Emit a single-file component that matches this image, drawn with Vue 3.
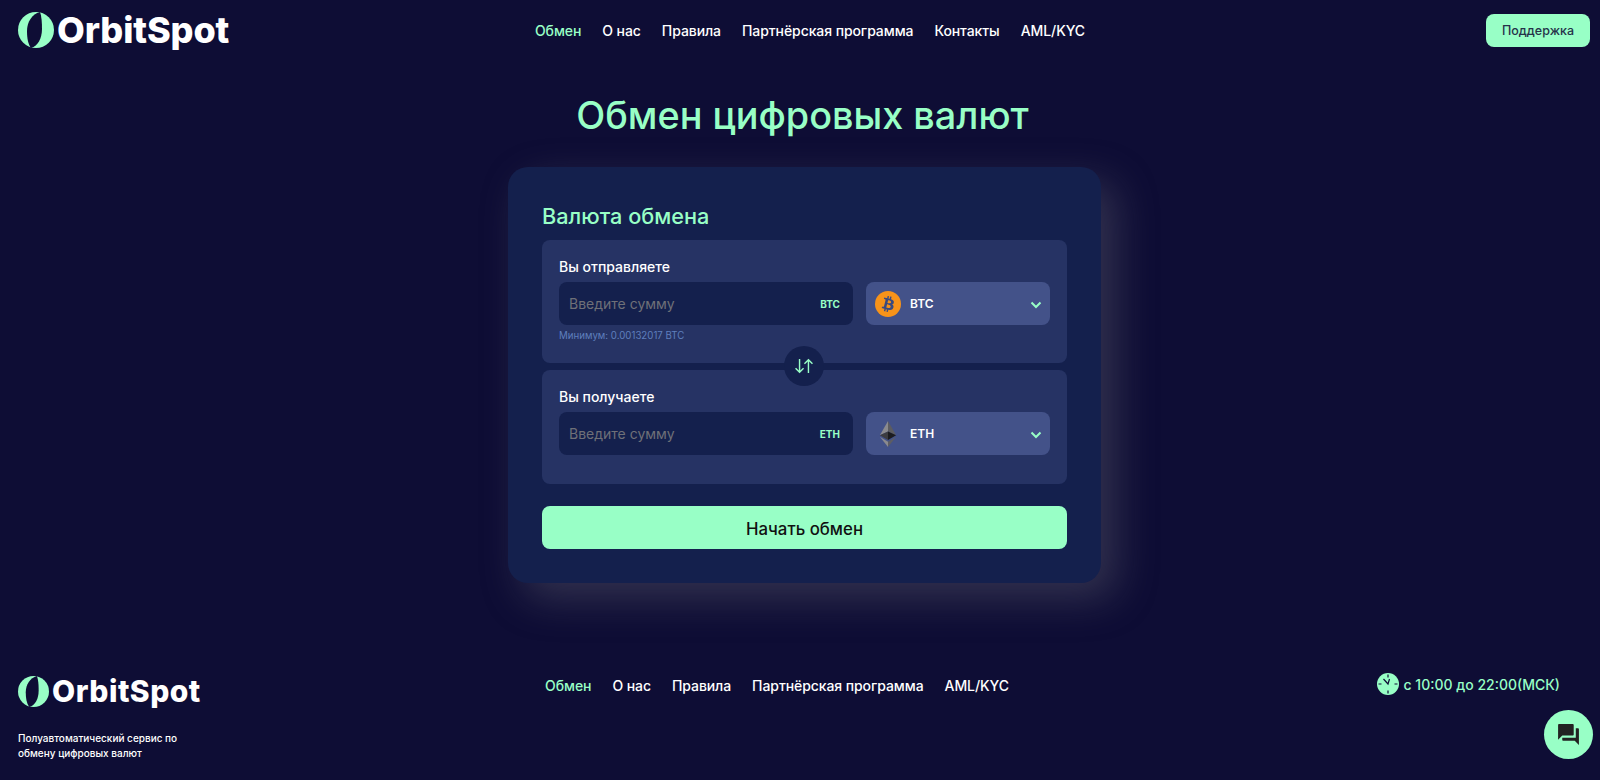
<template>
  <div class="page">
    <header class="top">
      <a class="logo">
        <svg class="logo-mark" viewBox="0 0 36 36">
          <circle cx="18" cy="18" r="18" fill="#98ffc6" />
          <path d="M22 0C14 2 9 10 9 19c0 7 1 13 4 17 7-2 11-10 11-19 0-7-.5-13-2-17z" fill="#0e0d35" />
        </svg>
        <span>OrbitSpot</span>
      </a>
      <nav class="menu">
        <a v-for="(item, i) in topLinks" :key="item" :class="{ active: i === 0 }">{{ item }}</a>
      </nav>
      <button class="support">Поддержка</button>
    </header>

    <main class="content">
      <h1>Обмен цифровых валют</h1>
      <section class="card">
        <h2>Валюта обмена</h2>
        <div class="panels">
          <div class="panel first">
            <label>Вы отправляете</label>
            <div class="row">
              <div class="amount">
                <input placeholder="Введите сумму" />
                <span>BTC</span>
              </div>
              <div class="select">
                <svg class="coin" viewBox="0 0 32 32">
                  <circle cx="16" cy="16" r="16" fill="#f7931a" />
                  <path fill="#3a4a80" d="M23.189 14.02c.314-2.096-1.283-3.223-3.465-3.975l.708-2.84-1.728-.43-.69 2.765c-.454-.114-.92-.22-1.385-.326l.695-2.783L15.596 6l-.708 2.839c-.376-.086-.746-.17-1.104-.26l.002-.009-2.384-.595-.46 1.846s1.283.294 1.256.312c.7.175.826.638.805 1.006l-.806 3.235c.048.012.11.03.18.057l-.183-.045-1.13 4.532c-.086.212-.303.531-.793.41.018.025-1.256-.313-1.256-.313l-.858 1.978 2.25.561c.418.105.828.215 1.231.318l-.715 2.872 1.727.43.708-2.84c.472.127.93.245 1.378.357l-.706 2.828 1.728.43.715-2.866c2.948.558 5.164.333 6.097-2.333.752-2.146-.037-3.385-1.588-4.192 1.13-.26 1.98-1.003 2.207-2.538zm-3.95 5.538c-.533 2.147-4.148.986-5.32.695l.95-3.805c1.172.293 4.929.872 4.37 3.11zm.535-5.569c-.487 1.953-3.495.96-4.47.717l.86-3.45c.975.243 4.118.696 3.61 2.733z" />
                </svg>
                <b>BTC</b>
                <svg class="chev" viewBox="0 0 12 8"><path d="M1.5 1.5 6 6l4.500-4.500" /></svg>
              </div>
            </div>
            <p class="min">Минимум: 0.00132017 BTC</p>
          </div>

          <div class="swap">
            <svg viewBox="0 0 22 18">
              <path d="M6 1v15M1.500 11.500 6 16l4.500-4.500M16 17V2M11.500 6.500 16 2l4.500 4.500" />
            </svg>
          </div>

          <div class="panel second">
            <label>Вы получаете</label>
            <div class="row">
              <div class="amount">
                <input placeholder="Введите сумму" />
                <span>ETH</span>
              </div>
              <div class="select">
                <svg class="coin" viewBox="0 0 32 32">
                  <polygon points="16,0 6,17.500 16,13" fill="#8a8a8e" />
                  <polygon points="16,0 26,17.500 16,13" fill="#5c5c60" />
                  <polygon points="16,13 6,17.500 16,23.500" fill="#3c3c40" />
                  <polygon points="16,13 26,17.500 16,23.500" fill="#1c1c1f" />
                  <polygon points="6,19.500 16,32 16,25.500" fill="#8a8a8e" />
                  <polygon points="26,19.500 16,32 16,25.500" fill="#5d5d62" />
                </svg>
                <b>ETH</b>
                <svg class="chev" viewBox="0 0 12 8"><path d="M1.5 1.5 6 6l4.500-4.500" /></svg>
              </div>
            </div>
          </div>
        </div>
        <button class="start">Начать обмен</button>
      </section>
    </main>

    <footer class="bottom">
      <div class="about">
        <a class="logo small">
          <svg class="logo-mark" viewBox="0 0 36 36">
            <circle cx="18" cy="18" r="18" fill="#98ffc6" />
            <path d="M22 0C14 2 9 10 9 19c0 7 1 13 4 17 7-2 11-10 11-19 0-7-.5-13-2-17z" fill="#0e0d35" />
          </svg>
          <span>OrbitSpot</span>
        </a>
        <p>Полуавтоматический сервис по обмену цифровых валют</p>
      </div>
      <nav class="menu">
        <a v-for="(item, i) in bottomLinks" :key="item" :class="{ active: i === 0 }">{{ item }}</a>
      </nav>
      <div class="hours">
        <svg viewBox="0 0 22 22">
          <circle cx="11" cy="11" r="11" fill="#98ffc6" />
          <path d="M11 1.500v3M11 17.500v3M1.500 11h3M17.500 11h3" stroke="#0e0d35" stroke-width="1.200" />
          <path d="M6.500 6 11 11l1.500-5" stroke="#0e0d35" stroke-width="1.200" fill="none" />
        </svg>
        <span>с 10:00 до 22:00(МСК)</span>
      </div>
    </footer>

    <button class="chat">
      <svg viewBox="0 0 24 24">
        <path d="M21 6h-2v9H6v2c0 .55.45 1 1 1h11l4 4V7c0-.55-.45-1-1-1zm-4 6V3c0-.55-.45-1-1-1H3c-.55 0-1 .45-1 1v14l4-4h10c.55 0 1-.45 1-1z" />
      </svg>
    </button>
  </div>
</template>

<script setup>
const topLinks = ['Обмен', 'О нас', 'Правила', 'Партнёрская программа', 'Контакты', 'AML/KYC']
const bottomLinks = ['Обмен', 'О нас', 'Правила', 'Партнёрская программа', 'AML/KYC']
</script>

<style>
html, body {
  margin: 0;
  background: #0e0d35;
}
</style>

<style scoped>
.page {
  position: relative;
  height: 780px;
  overflow: hidden;
  background: #0e0d35;
  color: #fff;
  font-family: Inter, "Noto Sans", sans-serif;
}

.top {
  display: grid;
  grid-template-columns: 1fr auto 1fr;
  align-items: center;
  height: 60px;
  padding: 0 10px 0 18px;
}

.top .menu {
  margin-left: 12px;
}

.logo {
  display: flex;
  align-items: center;
  gap: 3px;
  font-size: 36px;
  font-weight: 800;
  letter-spacing: -0.1px;
}

.logo-mark {
  width: 36px;
  height: 36px;
}

.logo.small {
  font-size: 30px;
  letter-spacing: 0.5px;
}

.logo.small .logo-mark {
  width: 31px;
  height: 31px;
}

.menu {
  display: flex;
  gap: 21px;
  font-size: 14px;
  font-weight: 500;
  letter-spacing: -0.08px;
}

.menu .active {
  color: #98ffc6;
}

.support {
  justify-self: end;
  width: 104px;
  height: 33px;
  border: none;
  border-radius: 8px;
  background: #98ffc6;
  color: #26324a;
  font: 500 12.5px Inter, sans-serif;
}

.content {
  display: flex;
  flex-direction: column;
  align-items: center;
  padding-left: 9px;
}

h1 {
  margin: 29px 4px 25px 0;
  color: #98ffc6;
  font-size: 37.8px;
  font-weight: 500;
  line-height: 53px;
}

.card {
  box-sizing: border-box;
  width: 593px;
  height: 416px;
  padding: 34px;
  border-radius: 20px;
  background: #14204d;
  box-shadow: 15px 15px 40px rgba(96, 96, 110, 0.45);
}

h2 {
  margin: 1px 0 9px;
  color: #98ffc6;
  font-size: 21.7px;
  font-weight: 500;
  line-height: 29px;
}

.panels {
  position: relative;
  display: flex;
  flex-direction: column;
  gap: 7px;
}

.panel {
  box-sizing: border-box;
  padding: 15px 17px 0;
  border-radius: 8px;
  background: #263364;
}

.panel.first {
  height: 123px;
}

.panel.second {
  height: 114px;
}

label {
  display: block;
  margin-bottom: 4px;
  font-size: 14px;
  font-weight: 500;
  line-height: 23px;
}

.row {
  display: flex;
  gap: 13px;
}

.amount {
  display: flex;
  align-items: center;
  box-sizing: border-box;
  width: 294px;
  height: 43px;
  padding: 0 13px 0 10px;
  border-radius: 8px;
  background: #14204d;
}

.amount input {
  flex: 1;
  min-width: 0;
  padding: 0;
  border: none;
  outline: none;
  background: transparent;
  color: #fff;
  font: 400 14px Inter, sans-serif;
}

.amount input::placeholder {
  color: #6f7078;
  opacity: 1;
}

.amount span {
  color: #98ffc6;
  font-size: 10px;
  font-weight: 700;
}

.select {
  display: flex;
  align-items: center;
  box-sizing: border-box;
  width: 184px;
  height: 43px;
  padding: 0 8px 0 9px;
  border-radius: 8px;
  background: #435289;
}

.select b {
  flex: 1;
  margin-left: 9px;
  font-size: 12px;
  font-weight: 600;
}

.coin {
  width: 26px;
  height: 26px;
}

.chev {
  width: 12px;
  height: 8px;
  margin-top: 3px;
  fill: none;
  stroke: #98ffc6;
  stroke-width: 2;
}

.min {
  margin: 5px 0 0;
  color: #5f7fbd;
  font-size: 9.7px;
  line-height: 12px;
}

.swap {
  position: absolute;
  top: 106px;
  left: 242px;
  display: flex;
  align-items: center;
  justify-content: center;
  width: 40px;
  height: 40px;
  border-radius: 50%;
  background: #14204d;
}

.swap svg {
  width: 20px;
  height: 16px;
  fill: none;
  stroke: #98ffc6;
  stroke-width: 1.6;
}

.start {
  display: block;
  width: 100%;
  height: 43px;
  margin-top: 22px;
  padding: 3px 0 0;
  border: none;
  border-radius: 8px;
  background: #98ffc6;
  color: #111;
  font: 500 16.8px Inter, sans-serif;
}

.bottom {
  display: grid;
  grid-template-columns: 1fr auto 1fr;
  align-items: start;
  margin-top: 90px;
  padding: 0 40px 0 18px;
}

.bottom .menu {
  margin: 4px 24px 0 0;
}

.about p {
  width: 180px;
  margin: 22px 0 0;
  font-size: 10px;
  font-weight: 500;
  line-height: 15px;
}

.hours {
  display: flex;
  align-items: center;
  justify-self: end;
  gap: 5px;
  color: #98ffc6;
  font-size: 14px;
  font-weight: 500;
}

.hours svg {
  width: 22px;
  height: 22px;
}

.chat {
  position: absolute;
  right: 7px;
  bottom: 21px;
  display: flex;
  align-items: center;
  justify-content: center;
  width: 49px;
  height: 49px;
  padding: 0;
  border: none;
  border-radius: 50%;
  background: #98ffc6;
}

.chat svg {
  width: 25px;
  height: 25px;
  fill: #222;
}
</style>
